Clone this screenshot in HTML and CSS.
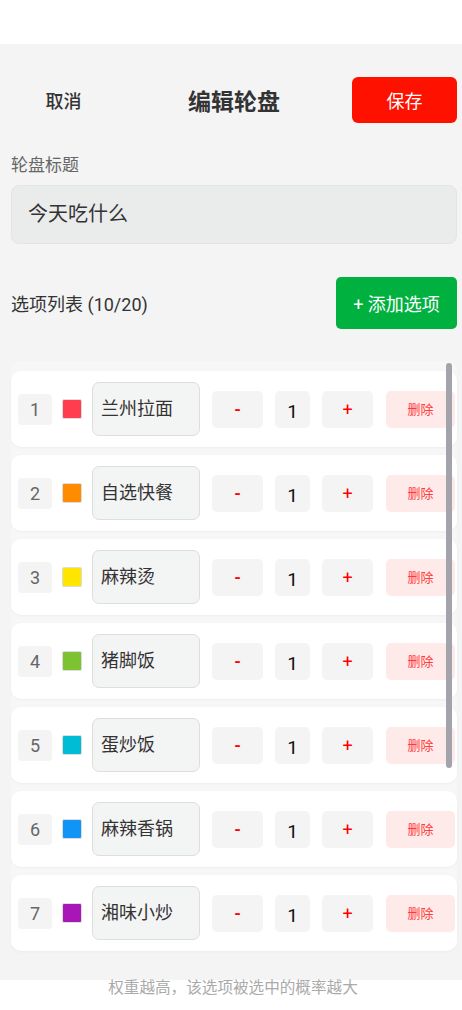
FILE: index.html
```html
<!DOCTYPE html>
<html lang="zh">
<head>
    <meta charset="UTF-8">
    <meta name="viewport" content="width=device-width, initial-scale=1.0">
    <title>编辑轮盘</title>
    <link rel="stylesheet" href="styles.css">
</head>
<body>
    <div class="status-bar"></div>

    <div class="page">
        <!-- 顶部导航 -->
        <div class="header">
            <button class="cancel-button">取消</button>
            <div class="title">编辑轮盘</div>
            <button class="save-button">保存</button>
        </div>

        <div class="field-label">轮盘标题</div>
        <div class="title-input">今天吃什么</div>

        <div class="section-row">
            <div class="section-title">选项列表 (10/20)</div>
            <button class="add-button">+ 添加选项</button>
        </div>

        <!-- 选项列表 -->
        <div class="option-list">
            <div class="option">
                <div class="option-index">1</div>
                <div class="swatch" style="background-color: #ff3d4f;"></div>
                <div class="option-name">兰州拉面</div>
                <div class="step-button minus">-</div>
                <div class="weight">1</div>
                <div class="step-button">+</div>
                <div class="delete-button">删除</div>
            </div>
            <div class="option">
                <div class="option-index">2</div>
                <div class="swatch" style="background-color: #ff8c00;"></div>
                <div class="option-name">自选快餐</div>
                <div class="step-button minus">-</div>
                <div class="weight">1</div>
                <div class="step-button">+</div>
                <div class="delete-button">删除</div>
            </div>
            <div class="option">
                <div class="option-index">3</div>
                <div class="swatch" style="background-color: #ffe500;"></div>
                <div class="option-name">麻辣烫</div>
                <div class="step-button minus">-</div>
                <div class="weight">1</div>
                <div class="step-button">+</div>
                <div class="delete-button">删除</div>
            </div>
            <div class="option">
                <div class="option-index">4</div>
                <div class="swatch" style="background-color: #7cc231;"></div>
                <div class="option-name">猪脚饭</div>
                <div class="step-button minus">-</div>
                <div class="weight">1</div>
                <div class="step-button">+</div>
                <div class="delete-button">删除</div>
            </div>
            <div class="option">
                <div class="option-index">5</div>
                <div class="swatch" style="background-color: #00bcd4;"></div>
                <div class="option-name">蛋炒饭</div>
                <div class="step-button minus">-</div>
                <div class="weight">1</div>
                <div class="step-button">+</div>
                <div class="delete-button">删除</div>
            </div>
            <div class="option">
                <div class="option-index">6</div>
                <div class="swatch" style="background-color: #1294f6;"></div>
                <div class="option-name">麻辣香锅</div>
                <div class="step-button minus">-</div>
                <div class="weight">1</div>
                <div class="step-button">+</div>
                <div class="delete-button">删除</div>
            </div>
            <div class="option">
                <div class="option-index">7</div>
                <div class="swatch" style="background-color: #a816b8;"></div>
                <div class="option-name">湘味小炒</div>
                <div class="step-button minus">-</div>
                <div class="weight">1</div>
                <div class="step-button">+</div>
                <div class="delete-button">删除</div>
            </div>

            <!-- 滚动条 -->
            <div class="scrollbar"></div>
        </div>
    </div>

    <div class="hint">权重越高，该选项被选中的概率越大</div>
</body>
</html>
```

FILE: styles.css
```css
/* 通用 */
body {
    margin: 0;
    background-color: #ffffff;
    font-family: 'Roboto', 'Noto Sans CJK SC', sans-serif;
    color: #333;
}

button {
    font-family: inherit;
    border: none;
    cursor: pointer;
}

.status-bar {
    height: 44px;
}

.page {
    background-color: #f4f4f4;
    height: 936px;
    padding: 0 5px 0 11px;
    box-sizing: border-box;
    overflow: hidden;
}

/* 顶部导航 */
.header {
    display: flex;
    align-items: center;
    justify-content: space-between;
    padding-top: 33px;
}

.cancel-button {
    width: 105px;
    height: 46px;
    background: none;
    font-size: 18px;
    font-weight: 500;
    color: #333;
}

.title {
    font-size: 23px;
    font-weight: bold;
    color: #333;
}

.save-button {
    width: 105px;
    height: 46px;
    background-color: #ff1100;
    color: white;
    font-size: 18px;
    border-radius: 6px;
}

/* 轮盘标题 */
.field-label {
    margin-top: 30px;
    font-size: 17px;
    color: #666;
    line-height: 24px;
}

.title-input {
    margin-top: 8px;
    height: 57px;
    line-height: 57px;
    padding-left: 16px;
    background-color: #eaebeb;
    border: 1px solid #e3e4e4;
    border-radius: 8px;
    font-size: 20px;
    color: #333;
}

/* 选项列表标题 */
.section-row {
    display: flex;
    align-items: center;
    justify-content: space-between;
    margin-top: 33px;
}

.section-title {
    font-size: 18px;
    color: #333;
}

.add-button {
    width: 121px;
    height: 52px;
    background-color: #00b140;
    color: white;
    font-size: 18px;
    border-radius: 5px;
}

/* 选项卡片 */
.option-list {
    position: relative;
    margin-top: 32px;
    padding-top: 10px;
    background-color: #f7f7f7;
    border-radius: 10px;
    display: flex;
    flex-direction: column;
    gap: 8px;
}

.option {
    display: flex;
    align-items: center;
    height: 76px;
    padding-left: 7px;
    background-color: white;
    border-radius: 10px;
    box-shadow: 0 1px 3px rgba(0, 0, 0, 0.04);
}

.option-index {
    width: 34px;
    height: 31px;
    line-height: 31px;
    text-align: center;
    background-color: #f4f4f4;
    border-radius: 4px;
    font-size: 18px;
    color: #666;
}

.swatch {
    width: 18px;
    height: 18px;
    margin-left: 10px;
    border: 1px solid #dddddd;
    border-radius: 2px;
}

.option-name {
    width: 98px;
    height: 52px;
    line-height: 52px;
    margin-left: 10px;
    padding-left: 8px;
    background-color: #f3f4f4;
    border: 1px solid #dedede;
    border-radius: 7px;
    font-size: 18px;
    color: #333;
}

.step-button {
    width: 51px;
    height: 37px;
    line-height: 37px;
    margin-left: 12px;
    text-align: center;
    background-color: #f4f4f4;
    border-radius: 5px;
    color: #ff0000;
    font-size: 18px;
}

.step-button.minus {
    font-weight: bold;
    font-size: 17px;
}

.weight {
    width: 35px;
    height: 37px;
    line-height: 42px;
    margin-left: 12px;
    text-align: center;
    background-color: #f4f4f4;
    border-radius: 5px;
    font-size: 19px;
    color: #111;
}

.delete-button {
    width: 69px;
    height: 37px;
    line-height: 37px;
    margin-left: 13px;
    text-align: center;
    background-color: #ffeaea;
    border-radius: 5px;
    color: #ff3b3b;
    font-size: 13px;
}

.scrollbar {
    position: absolute;
    top: 2px;
    right: 5px;
    width: 6px;
    height: 405px;
    background-color: #a3a3ab;
    border-radius: 3px;
}

/* 底部提示 */
.hint {
    text-align: center;
    font-size: 15.6px;
    color: #aaa;
    margin-top: -2px;
    padding-left: 4px;
    line-height: 20px;
}
```
